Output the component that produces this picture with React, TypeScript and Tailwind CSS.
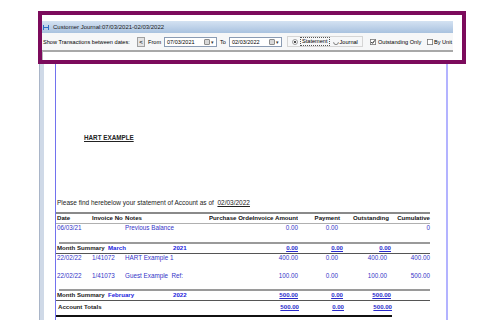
import React from "react";

const F = "font-['Liberation_Sans',Arial,sans-serif]";

function Cells({
  date,
  inv,
  notes,
  amt,
  pay,
  out,
  cum,
  cls = "text-[#3434c8]",
}: {
  date?: React.ReactNode;
  inv?: React.ReactNode;
  notes?: React.ReactNode;
  amt?: React.ReactNode;
  pay?: React.ReactNode;
  out?: React.ReactNode;
  cum?: React.ReactNode;
  cls?: string;
}) {
  return (
    <div className={`flex h-[8px] items-center whitespace-nowrap text-[6.3px] leading-[8px] ${cls}`}>
      <div className="w-[36px] pl-[1px]">{date}</div>
      <div className="w-[33px]">{inv}</div>
      <div className="w-[128px] whitespace-pre">{notes}</div>
      <div className="w-[45px] text-right">{amt}</div>
      <div className="w-[45px] pr-[5px] text-right">{pay}</div>
      <div className="w-[48px] pr-[4px] text-right">{out}</div>
      <div className="w-[39px] text-right">{cum}</div>
    </div>
  );
}

function TotalsRow({
  label,
  month,
  year,
  amt,
  out,
}: {
  label: string;
  month?: string;
  year?: string;
  amt: string;
  out: string;
}) {
  return (
    <div className="flex h-[8px] items-center whitespace-nowrap text-[6.1px] font-bold leading-[8px]">
      <div className="w-[52px] pl-[1px] text-[#1a1a1a]">{label}</div>
      <div className="w-[65px] text-[#2222dd]">{month}</div>
      <div className="w-[80px] text-[#2222dd]">{year}</div>
      <div className="w-[45px] text-right text-[#2a2acc] underline">{amt}</div>
      <div className="w-[45px] text-right text-[#2a2acc] underline">0.00</div>
      <div className="w-[48px] text-right text-[#2a2acc] underline">{out}</div>
    </div>
  );
}

function DateBox({ value }: { value: string }) {
  return (
    <div className="flex h-[10px] w-[53px] items-center border border-[#8a9bb3] bg-white pl-[2px]">
      <span className="w-[36px] text-[5.5px] leading-[8px]">{value}</span>
      <span className="ml-[1px] h-[6px] w-[6px] rounded-[1px] border border-[#8c8c8c] bg-[#d8d8d8]" />
      <span className="ml-[1px] text-[5px] leading-[6px] text-[#333]">▾</span>
    </div>
  );
}

function Radio({ checked }: { checked: boolean }) {
  return (
    <svg width="6" height="6" viewBox="0 0 6 6" className="shrink-0">
      {checked ? (
        <>
          <circle cx="3" cy="3" r="2.5" fill="#fff" stroke="#888" strokeWidth="0.8" />
          <circle cx="3" cy="3" r="1.1" fill="#222" />
        </>
      ) : (
        <path d="M0.6 3.2 A2.4 2.4 0 0 0 5.4 3.2" fill="none" stroke="#666" strokeWidth="0.8" />
      )}
    </svg>
  );
}

function Check({ checked }: { checked: boolean }) {
  return (
    <svg width="6" height="6" viewBox="0 0 6 6" className="shrink-0">
      <rect x="0.4" y="0.4" width="5.2" height="5.2" fill="#fff" stroke="#777" strokeWidth="0.8" />
      {checked && <path d="M1.3 3 L2.5 4.3 L4.8 1.4" fill="none" stroke="#111" strokeWidth="1" />}
    </svg>
  );
}

export default function App() {
  return (
    <div className={`relative h-[327px] w-[482px] overflow-hidden bg-white ${F} text-black`}>
      {/* highlighted app header */}
      <div className="ml-[38px] mt-[11px] h-[53px] w-[428px] border-[4px] border-[#7c0b5c] bg-white">
        <div className="h-[6px]" />
        <div className="flex h-[12px] w-[411px] items-center bg-gradient-to-b from-[#d4e2f2] to-[#a9c2df]">
          <svg width="6" height="5" viewBox="0 0 6 5" className="ml-[1px]">
            <path d="M0.5 0 V5 M5.5 0 V5 M0.5 2.5 H5.5" stroke="#2f6fc4" strokeWidth="1" fill="none" />
          </svg>
          <span className="ml-[4px] text-[6px] leading-[8px] text-[#1a1a1a]">
            Customer Journal:07/03/2021-02/03/2022
          </span>
        </div>
        <div className="flex h-[17px] w-[411px] items-center whitespace-nowrap bg-[#f6f7f8] text-[5.6px] leading-[8px]">
          <span className="w-[95px] pl-[1px]">Show Transactions between dates:</span>
          <span className="flex h-[10px] w-[8px] items-center justify-center border border-[#a0a0a0] bg-[#e4e4e4] text-[6px] font-bold text-[#333]">
            &lt;
          </span>
          <span className="ml-[3px] w-[16px]">From</span>
          <DateBox value="07/03/2021" />
          <span className="ml-[3px] w-[9px]">To</span>
          <DateBox value="02/03/2022" />
          <div className="ml-[5px] flex h-[11px] w-[76px] items-center border border-[#d5d5d5] pl-[4px]">
            <Radio checked />
            <span className="ml-[2px] border border-dotted border-[#555] px-[1px] leading-[7px]">Statement</span>
            <span className="ml-[3px]">
              <Radio checked={false} />
            </span>
            <span className="ml-[1px]">Journal</span>
          </div>
          <div className="ml-[7px] flex items-center">
            <Check checked />
            <span className="ml-[2px] w-[49px]">Outstanding Only</span>
            <Check checked={false} />
            <span className="ml-[1px]">By Unit</span>
          </div>
        </div>
        <div className="h-[10px] w-[411px] border-l border-t-2 border-l-[#b8b8b8] border-t-[#a8a8a8] bg-white" />
      </div>

      {/* report area */}
      <div className="flex">
        <div className="ml-[39px] h-[256px] w-[5px] border-l border-[#a9b5c8] bg-[#cfd9e7]" />
        <div className="ml-[11px] h-[256px] w-[393px] border-l border-r-2 border-l-[#7272ee] border-r-[#b3b3ff] bg-white">
          <div className="h-[70px]" />
          <div className="h-[8px] pl-[28px] text-[6.3px] font-bold leading-[8px] text-[#222] underline">HART EXAMPLE</div>
          <div className="h-[57px]" />
          <div className="flex h-[8px] items-center whitespace-pre pl-[1px] text-[6.5px] leading-[8px] text-[#222]">
            <span>Please find herebelow your statement of Account as of  </span>
            <span className="underline">02/03/2022</span>
          </div>
          <div className="h-[5px]" />
          <div className="h-[2px] w-[374px] bg-[#8a8a8a]" />
          <div className="flex h-[8px] items-center whitespace-nowrap text-[6.1px] font-bold leading-[8px] text-[#111]">
            <div className="w-[36px] pl-[1px]">Date</div>
            <div className="w-[33px]">Invoice No</div>
            <div className="w-[84px]">Notes</div>
            <div className="w-[44px] overflow-hidden">Purchase Order</div>
            <div className="flex w-[45px] justify-end overflow-hidden">
              <span>Invoice Amount</span>
            </div>
            <div className="w-[45px] pr-[3px] text-right">Payment</div>
            <div className="w-[48px] pr-[2px] text-right">Outstanding</div>
            <div className="w-[39px] text-right">Cumulative</div>
          </div>
          <div className="mt-[1px] h-px w-[374px] bg-[#b0b0b0]" />
          <Cells date="06/03/21" notes="Previous Balance" amt="0.00" pay="0.00" cum="0" />
          <div className="h-[10px]" />
          <div className="ml-[3px] h-[2px] w-[371px] bg-[#9a9a9a]" />
          <TotalsRow label="Month Summary" month="March" year="2021" amt="0.00" out="0.00" />
          <div className="mt-[1px] h-px w-[374px] bg-[#555]" />
          <Cells date="22/02/22" inv="1/41072" notes="HART Example 1" amt="400.00" pay="0.00" out="400.00" cum="400.00" />
          <div className="h-[10px]" />
          <Cells date="22/02/22" inv="1/41073" notes="Guest Example  Ref:" amt="100.00" pay="0.00" out="100.00" cum="500.00" />
          <div className="h-[9px]" />
          <div className="ml-[3px] h-[2px] w-[371px] bg-[#9a9a9a]" />
          <TotalsRow label="Month Summary" month="February" year="2022" amt="500.00" out="500.00" />
          <div className="mt-[1px] h-px w-[374px] bg-[#555]" />
          <div className="h-[2px]" />
          <div className="pl-[1px]">
            <TotalsRow label="Account Totals" amt="500.00" out="500.00" />
          </div>
          <div className="h-[4px]" />
          <div className="h-[2px] w-[336px] bg-[#111]" />
        </div>
      </div>
    </div>
  );
}
